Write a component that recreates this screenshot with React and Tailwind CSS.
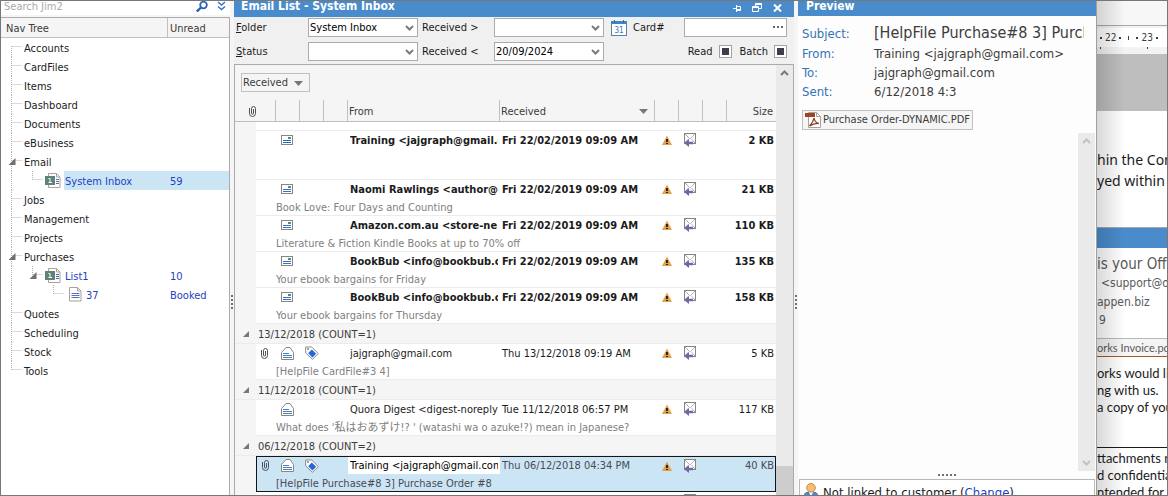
import React from "react";

const navRows = [
  { label: "Accounts", first: true },
  { label: "CardFiles" },
  { label: "Items" },
  { label: "Dashboard" },
  { label: "Documents" },
  { label: "eBusiness" },
  { label: "Email", open: true },
  { label: "System Inbox", level: 1, value: "59", icon: "list", selected: true },
  { label: "Jobs" },
  { label: "Management" },
  { label: "Projects" },
  { label: "Purchases", open: true },
  { label: "List1", level: 1, value: "10", icon: "list", open: true },
  { label: "37", level: 2, value: "Booked", icon: "page" },
  { label: "Quotes" },
  { label: "Scheduling" },
  { label: "Stock" },
  { label: "Tools", last: true },
];

const groups = [
  {
    emails: [
      { unread: true, blue: true, from: "Training <jajgraph@gmail.com>", received: "Fri 22/02/2019 09:09 AM", size: "2 KB", subject: "", tall: true },
      { unread: true, from: "Naomi Rawlings <author@", received: "Fri 22/02/2019 09:09 AM", size: "21 KB", subject: "Book Love: Four Days and Counting" },
      { unread: true, from: "Amazon.com.au <store-ne", received: "Fri 22/02/2019 09:09 AM", size: "110 KB", subject: "Literature & Fiction Kindle Books at up to 70% off" },
      { unread: true, from: "BookBub <info@bookbub.c", received: "Fri 22/02/2019 09:09 AM", size: "135 KB", subject: "Your ebook bargains for Friday" },
      { unread: true, from: "BookBub <info@bookbub.c", received: "Fri 22/02/2019 09:09 AM", size: "158 KB", subject: "Your ebook bargains for Thursday" },
    ],
  },
  {
    title: "13/12/2018 (COUNT=1)",
    emails: [{ clip: true, tag: true, from: "jajgraph@gmail.com", received: "Thu 13/12/2018 09:19 AM", size: "5 KB", subject: "[HelpFile CardFile#3 4]" }],
  },
  {
    title: "11/12/2018 (COUNT=1)",
    emails: [{ from: "Quora Digest <digest-noreply@", received: "Tue 11/12/2018 06:57 PM", size: "117 KB", subject: "What does '私はおあずけ!? ' (watashi wa o azuke!?) mean in Japanese?" }],
  },
  {
    title: "06/12/2018 (COUNT=2)",
    emails: [
      { clip: true, tag: true, selected: true, from: "Training <jajgraph@gmail.com>", received: "Thu 06/12/2018 04:34 PM", size: "40 KB", subject: "[HelpFile Purchase#8 3] Purchase Order #8" },
      { from: "", received: "", size: "", subject: "" },
    ],
  },
];

function Branch({ row }) {
  const level = row.level || 0;
  const width = [22, 44, 66][level];
  const x = [11.5, 32.5, 53.5][level];
  const end = [22, 43, 64][level];
  const line = { stroke: "#b4b4b4", strokeWidth: 1, strokeDasharray: "1 1" };
  return (
    <svg width={width} height="19" className="shrink-0" aria-hidden="true">
      <line x1="10.5" x2="10.5" y1={row.first ? 8 : 0} y2={row.last ? 9 : 19} {...line} />
      {level > 0 && <line x1={x - 1} x2={x - 1} y1="0" y2="9" {...line} />}
      <line x1={x} x2={end - 1} y1="8.5" y2="8.5" {...line} />
      {row.open && <path d={`M${x + 3} 6v7h-7z`} fill="#6f6f6f" />}
    </svg>
  );
}

function ListIcon() {
  return (
    <svg width="16" height="15" viewBox="0 0 16 15" className="shrink-0" aria-hidden="true">
      <path d="M3.500 .5h8l3.500 3.500v10.500h-11.500z" fill="#fff" stroke="#aaa09c" />
      <path d="M11.500 .5v3.500h3.500" fill="none" stroke="#aaa09c" />
      <path d="M11 6.500h3M11 8.500h3M11 10.500h3" stroke="#4f6bb8" />
      <rect x="0" y="3" width="10" height="9" fill="#5f8579" />
      <path d="M3.500 5.500h1.500v4M3.500 9.500h3.500" fill="none" stroke="#fff" />
    </svg>
  );
}

function PageIcon() {
  return (
    <svg width="13" height="15" viewBox="0 0 13 15" className="shrink-0" aria-hidden="true">
      <path d="M.5 .5h8l3.500 3.500v10h-11.500z" fill="#fff" stroke="#aaa09c" />
      <path d="M8.500 .5v3.500h3.500" fill="none" stroke="#aaa09c" />
      <path d="M2.500 6.500h8M2.500 8.500h8M2.500 10.500h8" stroke="#5b6bb8" />
    </svg>
  );
}

function Clip() {
  return (
    <svg width="8" height="11" viewBox="0 0 8 11" fill="none" stroke="#4f4f5c" aria-hidden="true">
      <path d="M.5 2v5.500a3 3 0 0 0 6 0V2.500a2 2 0 0 0-4 0v4.700a1 1 0 0 0 2 0V3" />
    </svg>
  );
}

function ClosedMail({ blue }) {
  return (
    <svg width="12" height="10" viewBox="0 0 12 10" aria-hidden="true">
      <rect x=".5" y=".5" width="11" height="9" fill="#fff" stroke="#858585" />
      <rect x="7" y="2" width="3" height="2" fill="#5f8579" />
      <path d="M2 5.500h8M2 7.500h8" stroke={blue ? "#1f66c8" : "#3a73bb"} />
    </svg>
  );
}

function OpenMail() {
  return (
    <svg width="14" height="13" viewBox="0 0 14 13" aria-hidden="true">
      <path d="M.5 12.500V5.500L5 .5h4L12.500 5.500v7z" fill="#fff" stroke="#858585" />
      <path d="M2 6.500h6M2 8.500h9M2 10.500h9" stroke="#4f83c0" />
    </svg>
  );
}

function Tag() {
  return (
    <svg width="14" height="14" viewBox="0 0 14 14" aria-hidden="true">
      <path d="M.7 1h6l6.600 6.500-5.800 5.800L.7 7z" fill="#fff" stroke="#8a8a8a" />
      <path d="M6.800 3.500l4.400 4.300-3.800 3.700L3.200 7.300z" fill="#2467d8" />
      <circle cx="3" cy="3" r="1" fill="#8a8a8a" />
    </svg>
  );
}

function Warning() {
  return (
    <svg width="10" height="10" viewBox="0 0 10 10" aria-hidden="true">
      <path d="M5 .5L10 10H0z" fill="#e3a04c" />
      <path d="M5 4v3M5 8v1" stroke="#2d2416" strokeWidth="2" />
    </svg>
  );
}

function Reply() {
  return (
    <svg width="12" height="14" viewBox="0 0 12 14" aria-hidden="true">
      <rect x=".5" y=".5" width="11" height="10" fill="#fff" stroke="#858585" />
      <path d="M1 1l5 5 5-5M1 10l3.500-4M11 10L7.500 6" fill="none" stroke="#858585" strokeDasharray="1 .6" />
      <path d="M0 10l5-4v2.800h4v2.400H5V14z" fill="#7566ac" />
    </svg>
  );
}

function Chevron({ up, light }) {
  return (
    <svg width="9" height="6" viewBox="0 0 9 6" fill="none" stroke={light ? "#c2c2c2" : "#7b7b7b"} strokeWidth="2" aria-hidden="true">
      <path d={up ? "M1 5l3.500-3.500L8 5" : "M1 1l3.500 3.500L8 1"} />
    </svg>
  );
}

function Dots({ vertical }) {
  return (
    <div className={vertical ? "flex flex-col gap-[2px]" : "flex gap-[2px]"} aria-hidden="true">
      {[0, 1, 2, 3].map((n) => (
        <i key={n} className="size-[2px] bg-[#707070]" />
      ))}
      {!vertical && <i className="size-[2px] bg-[#707070]" />}
    </div>
  );
}

function Splitter() {
  return (
    <div className="flex w-1 shrink-0 flex-col items-center bg-[#f5f5f5] pt-[294px]">
      <Dots vertical />
    </div>
  );
}

function Combo({ id, value }) {
  return (
    <div className="relative">
      <select id={id} defaultValue={value} className="block h-[19px] w-full appearance-none border border-[#ababab] bg-white px-px text-[11px] leading-4 text-black outline-none">
        <option>{value}</option>
      </select>
      <span className="pointer-events-none absolute top-[7px] right-1">
        <Chevron />
      </span>
    </div>
  );
}

function NavTree() {
  return (
    <aside className="flex w-[229px] shrink-0 flex-col bg-[#f5f5f5]">
      <div className="flex h-[14px] items-start bg-white pr-1 pl-[3px]">
        <input aria-label="Search" placeholder="Search Jim2" className="h-3 min-w-0 flex-1 bg-transparent text-[11px] leading-3 outline-none placeholder:text-[#a9a9a9]" />
        <button aria-label="Find" className="mr-[9px]">
          <svg width="12" height="11" viewBox="0 0 12 11" fill="none" stroke="#2d62b3">
            <circle cx="7.500" cy="4" r="3.300" strokeWidth="1.800" />
            <path d="M5 6.500L.8 10.500" strokeWidth="2.400" />
          </svg>
        </button>
        <button aria-label="More options">
          <svg width="9" height="10" viewBox="0 0 9 10" fill="none" stroke="#2d74c4" strokeWidth="1.400">
            <path d="M1 1l3.500 3L8 1M1 5.500l3.500 3L8 5.500" />
          </svg>
        </button>
      </div>
      <div className="mt-[2px] flex-1 border-t border-r border-[#ababab] bg-white">
        <table className="w-full table-fixed border-separate border-spacing-0">
          <colgroup>
            <col />
            <col className="w-[61px]" />
          </colgroup>
          <thead>
            <tr className="h-5 bg-[#f5f5f5] text-left text-[#3c3c3c]">
              <th className="border-r border-b border-[#c0c0c0] p-0 pt-[2px] pl-[5px] font-normal">Nav Tree</th>
              <th className="border-b border-[#c0c0c0] p-0 pt-[2px] pl-[2px] font-normal">Unread</th>
            </tr>
          </thead>
          <tbody>
            {navRows.map((row) => (
              <tr key={row.label} className={row.level ? "h-[19px] text-[#1c3fc4]" : "h-[19px] text-[#1b1b1b]"}>
                <td className="p-0">
                  <div className="flex h-[19px] items-center">
                    <Branch row={row} />
                    {row.icon === "list" && <ListIcon />}
                    {row.icon === "page" && <span className="pl-[2px]"><PageIcon /></span>}
                    <span className={row.selected ? "ml-[3px] h-[19px] flex-1 bg-[#cce5f5] pl-px leading-[21px]" : row.icon ? "ml-[3px] h-[19px] pl-px leading-[21px]" : "h-[19px] pl-px leading-[21px]"}>{row.label}</span>
                  </div>
                </td>
                <td className={row.selected ? "bg-[#cce5f5] p-0 pt-[2px] pl-[2px]" : "p-0 pt-[2px] pl-[2px]"}>{row.value}</td>
              </tr>
            ))}
          </tbody>
        </table>
      </div>
    </aside>
  );
}

function EmailRows({ mail }) {
  const top = mail.selected ? "border-t border-[#151515]" : "";
  const bottom = mail.selected ? "border-b border-[#151515]" : "border-b border-[#ececec]";
  const bg = mail.selected ? "bg-[#cce5f5]" : "bg-white";
  const icon = `${bg} ${top} p-0`;
  const pad = mail.selected ? "pt-px" : "pt-[2px]";
  return (
    <>
      <tr className={mail.unread ? "h-[18px] font-bold text-[#1b1b1b]" : mail.selected ? "h-[18px] text-[#4a4a52]" : "h-[18px] text-[#1b1b1b]"}>
        <td className="p-0" />
        <td className={mail.selected ? `${icon} border-l` : icon}>{mail.clip && <span className="ml-[5px] flex"><Clip /></span>}</td>
        <td className={icon}><span className="flex h-[17px] items-center pl-[5px]">{mail.unread ? <ClosedMail blue={mail.blue} /> : <OpenMail />}</span></td>
        <td className={icon}>{mail.tag && <span className="flex pl-[5px]"><Tag /></span>}</td>
        <td className={icon} />
        <td className={mail.selected ? `${top} ${pad} bg-white px-[2px] pb-0 text-black` : `${bg} ${pad} px-[2px] pb-0`}>
          <div className="overflow-hidden whitespace-nowrap">{mail.from}</div>
        </td>
        <td className={`${bg} ${top} ${pad} pr-0 pb-0 pl-[2px] whitespace-nowrap`}>{mail.received}</td>
        <td className={icon}><span className="flex pl-[7px]"><Warning /></span></td>
        <td className={icon}><span className="flex pl-[5px]"><Reply /></span></td>
        <td className={icon} />
        <td className={mail.selected ? `${bg} ${top} ${pad} border-r pr-px pb-0 pl-0 text-right` : `${bg} ${pad} pr-[2px] pb-0 pl-0 text-right`}>{mail.size}</td>
      </tr>
      <tr className={mail.tall ? "h-[31px]" : "h-[18px]"}>
        <td className="p-0" />
        <td className={mail.selected ? `${bg} ${bottom} border-l p-0` : `${bg} ${bottom} p-0`} />
        <td colSpan={9} className={mail.selected ? `${bg} ${bottom} border-r p-0 pt-[2px] text-[#4a4a52]` : `${bg} ${bottom} p-0 pt-[2px] text-[#808080]`}>{mail.subject}</td>
      </tr>
    </>
  );
}

function EmailList() {
  const th = "border-r border-b border-[#c0c0c0] p-0 pt-[2px] font-normal";
  return (
    <main className="flex min-w-0 flex-1 flex-col bg-[#f0f0f0]">
      <header className="flex h-4 items-start justify-between bg-[#4a8ccb] pr-3 pl-[7px] text-white">
        <h1 className="text-[12px] leading-[11px] font-bold">Email List - System Inbox</h1>
        <div className="flex items-center gap-[11px] pt-[2px]">
          <button aria-label="Pin">
            <svg width="8" height="8" viewBox="0 0 8 8" fill="none" stroke="#fff">
              <path d="M0 4.500h3M3.500 1v7M3 2.500h4.500v4H3M3 5.500h4.500" />
            </svg>
          </button>
          <button aria-label="Restore">
            <svg width="10" height="9" viewBox="0 0 10 9" fill="none" stroke="#fff">
              <path d="M3.500 3V.5h6v5H7M3.500 1.500h6M.5 3.500H6.500v5H.5zM.5 4.500h6" />
            </svg>
          </button>
          <button aria-label="Close">
            <svg width="9" height="8" viewBox="0 0 9 8" stroke="#fff" strokeWidth="2">
              <path d="M1 .5l7 7M8 .5l-7 7" />
            </svg>
          </button>
        </div>
      </header>
      <form className="grid grid-cols-[72px_110px_76px_110px_minmax(0,1fr)] items-center gap-y-[5px] pt-px pr-[7px] pb-[3px] pl-[2px] text-[#1b1b1b]">
        <label htmlFor="folder"><u>F</u>older</label>
        <Combo id="folder" value="System Inbox" />
        <label htmlFor="after" className="pl-1">Received &gt;</label>
        <Combo id="after" value="" />
        <div className="flex items-center pl-[7px]">
          <button type="button" aria-label="Calendar">
            <svg width="16" height="16" viewBox="0 0 16 16">
              <rect x=".5" y="2.500" width="15" height="13" fill="#fff" stroke="#5f7f9f" />
              <rect x="0" y="1" width="16" height="3" fill="#3b86c6" />
              <path d="M3.500 0v3M12.500 0v3" stroke="#5d6670" />
              <text x="8" y="13" textAnchor="middle" fontSize="8" fill="#2d74c4">31</text>
            </svg>
          </button>
          <label htmlFor="card" className="w-[50px] shrink-0 pl-[6px]">Card#</label>
          <div className="relative ml-auto w-[103px] min-w-0">
            <input id="card" className="block h-[19px] w-full border border-[#ababab] bg-white px-1 outline-none" />
            <button type="button" aria-label="Choose card" className="absolute top-2 right-1 flex gap-[2px]">
              <i className="size-[2px] bg-[#666]" />
              <i className="size-[2px] bg-[#666]" />
              <i className="size-[2px] bg-[#666]" />
            </button>
          </div>
        </div>
        <label htmlFor="status"><u>S</u>tatus</label>
        <Combo id="status" value="" />
        <label htmlFor="before" className="pl-1">Received &lt;</label>
        <Combo id="before" value="20/09/2024" />
        <div className="flex items-center justify-end gap-2">
          <label className="flex items-center gap-[6px]">
            Read
            <input type="checkbox" defaultChecked className="size-[13px] appearance-none border border-[#a8a0a0] bg-[#3f3d4c] shadow-[inset_0_0_0_2px_white]" />
          </label>
          <label className="flex items-center gap-[6px]">
            Batch
            <input type="checkbox" defaultChecked className="size-[13px] appearance-none border border-[#a8a0a0] bg-[#3f3d4c] shadow-[inset_0_0_0_2px_white]" />
          </label>
        </div>
      </form>
      <section className="flex min-h-0 flex-1 border border-b-0 border-[#ababab] bg-[#f5f5f5]">
        <div className="min-w-0 flex-1 overflow-hidden">
          <div className="flex h-[35px] items-start pt-2 pl-[6px]">
            <button className="flex h-[19px] items-center gap-[6px] border border-[#c0c0c0] pt-px pr-[6px] pl-px text-[#3c3c3c]">
              Received
              <svg width="9" height="5" viewBox="0 0 9 5" aria-hidden="true"><path d="M0 0h9L4.500 5z" fill="#777" /></svg>
            </button>
          </div>
          <table className="w-full table-fixed border-separate border-spacing-0">
            <colgroup>
              <col className="w-[21px]" />
              <col className="w-[20px]" />
              <col className="w-6" />
              <col className="w-6" />
              <col className="w-6" />
              <col className="w-[152px]" />
              <col />
              <col className="w-6" />
              <col className="w-6" />
              <col className="w-6" />
              <col className="w-[49px]" />
            </colgroup>
            <thead>
              <tr className="h-[22px] text-left text-[#3c3c3c]">
                <th colSpan={2} className={th}><span className="flex justify-center pr-1"><Clip /></span></th>
                <th className={th} />
                <th className={th} />
                <th className={th} />
                <th className={`${th} pl-px`}>From</th>
                <th className={`${th} pl-px`}>
                  <span className="flex items-center justify-between pr-[6px]">
                    Received
                    <svg width="9" height="5" viewBox="0 0 9 5" aria-hidden="true"><path d="M0 0h9L4.500 5z" fill="#777" /></svg>
                  </span>
                </th>
                <th className={th} />
                <th className={th} />
                <th className={th} />
                <th className="border-b border-[#c0c0c0] p-0 pt-[2px] pr-[3px] text-right font-normal">Size</th>
              </tr>
            </thead>
            <tbody>
              <tr className="h-[9px]">
                <td className="p-0" />
                <td colSpan={10} className="border-b border-[#ececec] bg-white p-0" />
              </tr>
              {groups.map((group, g) => (
                <React.Fragment key={g}>
                  {group.title && (
                    <tr className="h-5 text-[#3c3c3c]">
                      <td className="border-b border-[#ececec] p-0">
                        <svg width="6" height="6" viewBox="0 0 6 6" className="ml-2" aria-hidden="true"><path d="M6 0v6H0z" fill="#777" /></svg>
                      </td>
                      <td colSpan={10} className="border-b border-[#ececec] p-0 pt-[2px] pl-[2px]">{group.title}</td>
                    </tr>
                  )}
                  {group.emails.map((mail, m) => (
                    <EmailRows key={m} mail={mail} />
                  ))}
                </React.Fragment>
              ))}
            </tbody>
          </table>
        </div>
        <div className="flex w-[17px] shrink-0 flex-col items-center bg-[#eaeaea] pt-[5px]">
          <Chevron up />
          <div className="mt-auto h-[29px] w-full bg-[#cdcdcf]" />
        </div>
      </section>
    </main>
  );
}

function Preview() {
  const field = "text-[#3572b5]";
  return (
    <section className="flex w-[299px] shrink-0 flex-col border-r border-[#a0a0a0] bg-[#fdfdfd]">
      <h2 className="h-[15px] bg-[#4a8ccb] pl-2 text-[12px] leading-[11px] font-bold text-white">Preview</h2>
      <dl className="grid grid-cols-[72px_minmax(0,1fr)] items-center pt-[6px] pr-3 pl-1 text-[13px] leading-[19px] text-[#3c3c3c]">
        <dt className={field}>Subject:</dt>
        <dd className="overflow-hidden text-[16px] leading-[22px] whitespace-nowrap">[HelpFile Purchase#8 3] Purchase</dd>
        <dt className={field}>From:</dt>
        <dd>Training &lt;jajgraph@gmail.com&gt;</dd>
        <dt className={field}>To:</dt>
        <dd>jajgraph@gmail.com</dd>
        <dt className={field}>Sent:</dt>
        <dd>6/12/2018 4:3</dd>
      </dl>
      <button className="mt-[9px] ml-1 flex h-5 items-center gap-[2px] self-start border border-[#c0c0c0] bg-[#f5f5f5] px-[2px] text-[11px] text-[#3c3c3c]">
        <svg width="16" height="16" viewBox="0 0 16 16" aria-hidden="true">
          <path d="M3.500 .5h8l4 4v11h-12z" fill="#fff" stroke="#a8a0a0" />
          <path d="M11.500 .5v4h4" fill="none" stroke="#a8a0a0" />
          <path d="M0 1h10v4H0z" fill="#9a4524" />
          <path d="M4.500 14c2-2 4-5 4.500-8 .5 3 2.500 5 5 5.500-3-.5-6 .2-9.500 2.500z" fill="none" stroke="#8a3d22" strokeWidth="1.300" />
        </svg>
        Purchase Order-DYNAMIC.PDF
      </button>
      <div className="mt-[3px] mr-px flex min-h-0 flex-1 justify-end">
        <div className="flex w-[17px] flex-col items-center justify-between bg-[#eaeaea] py-[5px]">
          <Chevron up light />
          <Chevron light />
        </div>
      </div>
      <div className="flex h-2 items-center justify-center"><Dots /></div>
      <div className="mr-px ml-px flex h-4 items-start gap-[5px] overflow-hidden border border-b-0 border-[#b8b8b8] bg-white pt-[3px] pl-1 text-[13px] leading-[20px] text-[#1b1b1b]">
        <svg width="14" height="14" viewBox="0 0 14 14" className="shrink-0" aria-hidden="true">
          <path d="M0 13c0-3 3-4 7-4s7 1 7 4v1H0z" fill="#4a8ccb" stroke="#3c6ca8" />
          <path d="M5 9h4l-2 5z" fill="#fff" />
          <circle cx="7" cy="4.800" r="4.300" fill="#f3bd76" stroke="#c98a42" />
        </svg>
        <p className="whitespace-nowrap">
          Not linked to customer (<a href="#change" className="text-[#1c3fc4] underline">Change</a>)
        </p>
      </div>
    </section>
  );
}

function DocumentEdge() {
  const dot = "size-[2px] shrink-0 bg-[#3c3c3c]";
  return (
    <section className="relative flex w-[70px] shrink-0 flex-col overflow-hidden bg-white whitespace-nowrap text-[#1b1b1b]">
      <div className="h-[25px] shrink-0 border-b border-[#a8a8a8] bg-[#f7f7f7]" />
      <div className="h-7 shrink-0 bg-[#f3f3f3] pt-[2px]">
        <div className="flex h-[19px] items-center gap-[3px] bg-white pl-[3px] text-[10px] text-[#3c3c3c]">
          <i className={dot} />
          <span>22</span>
          <i className={dot} />
          <i className="mx-1 h-1 w-px bg-[#3c3c3c]" />
          <i className={dot} />
          <span>23</span>
          <i className={dot} />
        </div>
        <div className="flex gap-[46px] pl-[3px]">
          <i className="h-[2px] w-px bg-[#3c3c3c]" />
          <i className="h-[2px] w-px bg-[#3c3c3c]" />
        </div>
      </div>
      <div className="h-[57px] shrink-0 bg-[#bebebe]" />
      <div className="pt-[38px] font-['Noto_Sans',sans-serif] text-[14px] leading-[21px]">
        <p>hin the Con</p>
        <p>yed within</p>
      </div>
      <div className="mt-[36px] h-[21px] shrink-0 border-t border-[#a8a8a8] bg-[#4a8ccb]" />
      <div className="pt-[6px] text-[#5a5a5a]">
        <p className="text-[15px] leading-5">is your Off</p>
        <p className="pl-1 text-[12px] leading-[19px]">&lt;support@o</p>
        <p className="text-[12px] leading-[19px]">appen.biz</p>
        <p className="pl-[2px] text-[12px] leading-[17px]">9</p>
      </div>
      <div className="mt-[9px] h-[19px] shrink-0 border-t border-b border-t-[#b8b8b8] border-b-[#a35a22] bg-[#f5f5f5] font-['Lato',sans-serif] text-[11px] leading-[17px] text-[#5a5a5a]">orks Invoice.pd</div>
      <div className="pt-2 font-['Lato',sans-serif] text-[13px] leading-[17px]">
        <p>orks would lik</p>
        <p>ng with us.</p>
        <p>a copy of you</p>
      </div>
      <div className="mt-[31px] border-t border-[#1b1b1b] pt-[2px] font-['Lato',sans-serif] text-[13px] leading-[17px]">
        <p>ttachments n</p>
        <p>d confidentia</p>
        <p>ntended for</p>
      </div>
      <div className="pointer-events-none absolute inset-y-0 left-0 w-7 bg-linear-to-r from-black/15 to-transparent" />
    </section>
  );
}

export default function App() {
  return (
    <div className="flex h-screen overflow-hidden border border-[#777] bg-[#f5f5f5] font-['DejaVu_Sans_Condensed','Noto_Sans_CJK_JP',sans-serif] text-[11px] leading-[14px]">
      <NavTree />
      <Splitter />
      <EmailList />
      <Splitter />
      <Preview />
      <DocumentEdge />
    </div>
  );
}
